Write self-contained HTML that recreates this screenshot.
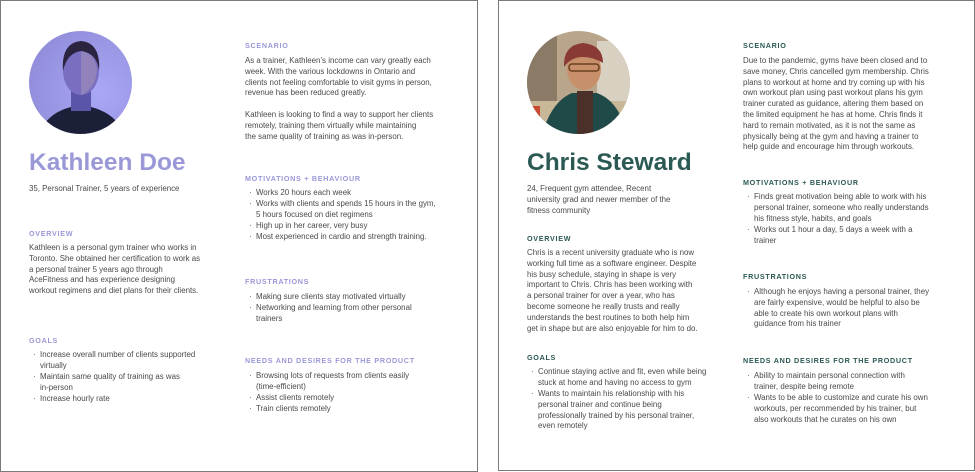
<!DOCTYPE html>
<html><head><meta charset="utf-8"><style>
*{margin:0;padding:0;box-sizing:border-box}
body{width:975px;height:472px;background:#fff;position:relative;overflow:hidden;font-family:"Liberation Sans",sans-serif;color:#555}
.panel{position:absolute;border:1.5px solid #7a7a7a}
.t{position:absolute;font-size:7.9px;line-height:10.8px;white-space:nowrap;color:#4a4a4a}
.h{position:absolute;font-size:7.2px;font-weight:bold;letter-spacing:0.7px;white-space:nowrap}
.p .h{color:#9b98d8}.g .h{color:#2b5953}
.name{position:absolute;font-size:24.5px;font-weight:bold;white-space:nowrap}
.b{position:absolute;font-size:7.9px;line-height:10.8px;white-space:nowrap;color:#4a4a4a}
.b span{position:absolute;left:-7px}
</style></head><body>
<div class="panel" style="left:0;top:0;width:478px;height:472px"></div>
<div class="panel" style="left:498px;top:0;width:477px;height:471px"></div>

<svg style="position:absolute;left:29px;top:31px" width="103" height="103" viewBox="0 0 103 103">
<defs><clipPath id="c1"><circle cx="51.5" cy="51.5" r="51.5"/></clipPath>
<radialGradient id="bg1" cx="0.7" cy="0.6" r="0.8"><stop offset="0" stop-color="#a9a8f6"/><stop offset="1" stop-color="#8f8bd8"/></radialGradient></defs>
<g clip-path="url(#c1)">
<rect width="103" height="103" fill="url(#bg1)"/>
<path d="M10 103 Q18 82 42 76 L62 76 Q86 82 96 103Z" fill="#1b2038"/>
<rect x="42" y="58" width="20" height="22" fill="#5a55a8"/>
<ellipse cx="52" cy="40" rx="18" ry="24" fill="#7a6ec0"/>
<path d="M34 40 Q32 12 52 10 Q72 12 70 40 Q68 22 52 20 Q38 22 34 40Z" fill="#2a2440"/>
<path d="M52 20 Q66 22 68 40 Q66 58 52 64 Z" fill="#a08fb8" opacity="0.6"/>
</g></svg>

<svg style="position:absolute;left:527px;top:31px" width="103" height="103" viewBox="0 0 103 103">
<defs><clipPath id="c2"><circle cx="51.5" cy="51.5" r="51.5"/></clipPath></defs>
<g clip-path="url(#c2)">
<rect width="103" height="103" fill="#b8a58a"/>
<rect x="0" y="0" width="30" height="103" fill="#8a7a66"/>
<rect x="70" y="10" width="33" height="60" fill="#d8d0c0"/>
<rect x="0" y="70" width="103" height="33" fill="#c8b898"/>
<path d="M15 103 Q25 70 45 62 L70 62 Q92 70 100 103Z" fill="#1f4a48"/>
<rect x="50" y="60" width="16" height="43" fill="#4a3028"/>
<ellipse cx="57" cy="38" rx="17" ry="21" fill="#c8906a"/>
<path d="M37 36 Q36 14 56 12 Q76 14 76 32 Q66 26 56 26 Q44 26 37 36Z" fill="#8a3a34"/>
<rect x="42" y="33" width="30" height="7" rx="3" fill="none" stroke="#6a4020" stroke-width="1.5"/>
<rect x="5" y="75" width="8" height="15" fill="#c84a30"/>
</g></svg>

<div class="p">
<div class="name" style="left:29px;top:149px;color:#9b98d8">Kathleen Doe</div>
<div class="t" style="left:29px;top:184px">35, Personal Trainer, 5 years of experience</div>
<div class="h" style="left:29px;top:229px">OVERVIEW</div>
<div class="t" style="left:29px;top:243px">Kathleen is a personal gym trainer who works in<br>Toronto. She obtained her certification to work as<br>a personal trainer 5 years ago through<br>AceFitness and has experience designing<br>workout regimens and diet plans for their clients.</div>
<div class="h" style="left:29px;top:336px">GOALS</div>
<div class="b" style="left:40px;top:350px"><span>·</span>Increase overall number of clients supported<br>virtually</div>
<div class="b" style="left:40px;top:372px"><span>·</span>Maintain same quality of training as was<br>in-person</div>
<div class="b" style="left:40px;top:394px"><span>·</span>Increase hourly rate</div>

<div class="h" style="left:245px;top:41px">SCENARIO</div>
<div class="t" style="left:245px;top:56px">As a trainer, Kathleen’s income can vary greatly each<br>week. With the various lockdowns in Ontario and<br>clients not feeling comfortable to visit gyms in person,<br>revenue has been reduced greatly.</div>
<div class="t" style="left:245px;top:110px">Kathleen is looking to find a way to support her clients<br>remotely, training them virtually while maintaining<br>the same quality of training as was in-person.</div>
<div class="h" style="left:245px;top:174px">MOTIVATIONS + BEHAVIOUR</div>
<div class="b" style="left:256px;top:188px"><span>·</span>Works 20 hours each week</div>
<div class="b" style="left:256px;top:199px"><span>·</span>Works with clients and spends 15 hours in the gym,<br>5 hours focused on diet regimens</div>
<div class="b" style="left:256px;top:221px"><span>·</span>High up in her career, very busy</div>
<div class="b" style="left:256px;top:232px"><span>·</span>Most experienced in cardio and strength training.</div>
<div class="h" style="left:245px;top:277px">FRUSTRATIONS</div>
<div class="b" style="left:256px;top:292px"><span>·</span>Making sure clients stay motivated virtually</div>
<div class="b" style="left:256px;top:303px"><span>·</span>Networking and learning from other personal<br>trainers</div>
<div class="h" style="left:245px;top:356px">NEEDS AND DESIRES FOR THE PRODUCT</div>
<div class="b" style="left:256px;top:371px"><span>·</span>Browsing lots of requests from clients easily<br>(time-efficient)</div>
<div class="b" style="left:256px;top:393px"><span>·</span>Assist clients remotely</div>
<div class="b" style="left:256px;top:404px"><span>·</span>Train clients remotely</div>
</div>

<div class="g">
<div class="name" style="left:527px;top:149px;color:#2b5953">Chris Steward</div>
<div class="t" style="left:527px;top:184px">24, Frequent gym attendee, Recent<br>university grad and newer member of the<br>fitness community</div>
<div class="h" style="left:527px;top:234px">OVERVIEW</div>
<div class="t" style="left:527px;top:248px">Chris is a recent university graduate who is now<br>working full time as a software engineer. Despite<br>his busy schedule, staying in shape is very<br>important to Chris. Chris has been working with<br>a personal trainer for over a year, who has<br>become someone he really trusts and really<br>understands the best routines to both help him<br>get in shape but are also enjoyable for him to do.</div>
<div class="h" style="left:527px;top:353px">GOALS</div>
<div class="b" style="left:538px;top:367px"><span>·</span>Continue staying active and fit, even while being<br>stuck at home and having no access to gym</div>
<div class="b" style="left:538px;top:389px"><span>·</span>Wants to maintain his relationship with his<br>personal trainer and continue being<br>professionally trained by his personal trainer,<br>even remotely</div>

<div class="h" style="left:743px;top:41px">SCENARIO</div>
<div class="t" style="left:743px;top:56px">Due to the pandemic, gyms have been closed and to<br>save money, Chris cancelled gym membership. Chris<br>plans to workout at home and try coming up with his<br>own workout plan using past workout plans his gym<br>trainer curated as guidance, altering them based on<br>the limited equipment he has at home. Chris finds it<br>hard to remain motivated, as it is not the same as<br>physically being at the gym and having a trainer to<br>help guide and encourage him through workouts.</div>
<div class="h" style="left:743px;top:178px">MOTIVATIONS + BEHAVIOUR</div>
<div class="b" style="left:754px;top:192px"><span>·</span>Finds great motivation being able to work with his<br>personal trainer, someone who really understands<br>his fitness style, habits, and goals</div>
<div class="b" style="left:754px;top:225px"><span>·</span>Works out 1 hour a day, 5 days a week with a<br>trainer</div>
<div class="h" style="left:743px;top:272px">FRUSTRATIONS</div>
<div class="b" style="left:754px;top:287px"><span>·</span>Although he enjoys having a personal trainer, they<br>are fairly expensive, would be helpful to also be<br>able to create his own workout plans with<br>guidance from his trainer</div>
<div class="h" style="left:743px;top:356px">NEEDS AND DESIRES FOR THE PRODUCT</div>
<div class="b" style="left:754px;top:371px"><span>·</span>Ability to maintain personal connection with<br>trainer, despite being remote</div>
<div class="b" style="left:754px;top:393px"><span>·</span>Wants to be able to customize and curate his own<br>workouts, per recommended by his trainer, but<br>also workouts that he curates on his own</div>
</div>
</body></html>
